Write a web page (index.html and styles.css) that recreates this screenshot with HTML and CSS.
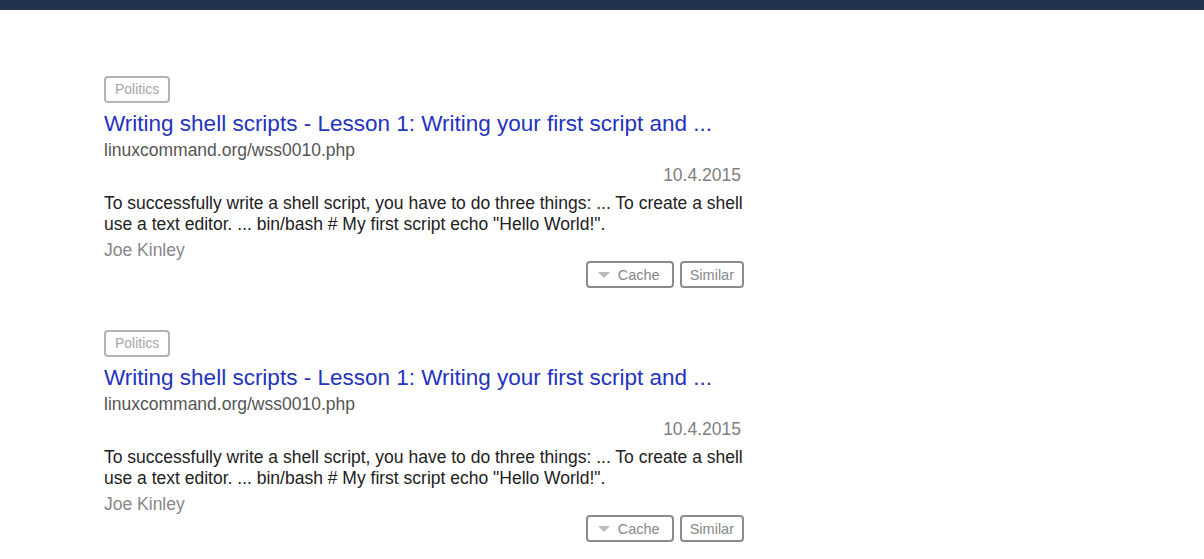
FILE: index.html
```html
<!DOCTYPE html>
<html>
<head>
<meta charset="utf-8">
<link rel="stylesheet" href="styles.css">
</head>
<body>
<div class="topbar"></div>
<main class="results">
  <article class="result">
    <span class="tag">Politics</span>
    <a class="title" href="#">Writing shell scripts - Lesson 1: Writing your first script and ...</a>
    <div class="url">linuxcommand.org/wss0010.php</div>
    <div class="date">10.4.2015</div>
    <p class="snippet">To successfully write a shell script, you have to do three things: ... To create a shell use a text editor. ... bin/bash # My first script echo "Hello World!".</p>
    <div class="author">Joe Kinley</div>
    <div class="actions">
      <button class="btn btn-cache"><span class="caret"></span>Cache</button>
      <button class="btn">Similar</button>
    </div>
  </article>
  <article class="result">
    <span class="tag">Politics</span>
    <a class="title" href="#">Writing shell scripts - Lesson 1: Writing your first script and ...</a>
    <div class="url">linuxcommand.org/wss0010.php</div>
    <div class="date">10.4.2015</div>
    <p class="snippet">To successfully write a shell script, you have to do three things: ... To create a shell use a text editor. ... bin/bash # My first script echo "Hello World!".</p>
    <div class="author">Joe Kinley</div>
    <div class="actions">
      <button class="btn btn-cache"><span class="caret"></span>Cache</button>
      <button class="btn">Similar</button>
    </div>
  </article>
</main>
</body>
</html>
```
FILE: styles.css
```css
html, body {
  margin: 0;
  padding: 0;
  background: #fff;
  font-family: "Liberation Sans", Arial, sans-serif;
}
.topbar {
  height: 10px;
  background: #22344d;
}
.results {
  width: 640px;
  margin-left: 104px;
  padding-top: 66px;
  display: flex;
  flex-direction: column;
  gap: 42px;
}
.result {
  display: flex;
  flex-direction: column;
  align-items: flex-start;
}
.tag {
  display: inline-block;
  border: 2px solid #b3b3b3;
  border-radius: 4px;
  color: #a6a6a6;
  font-size: 14px;
  line-height: 23px;
  padding: 0 9px;
}
.title {
  margin-top: 7px;
  font-size: 22.5px;
  line-height: 28px;
  color: #2433c0;
  text-decoration: none;
}
.url {
  margin-top: 1px;
  font-size: 17.5px;
  line-height: 22px;
  color: #555;
}
.date {
  align-self: stretch;
  text-align: right;
  padding-right: 3px;
  margin-top: 3px;
  font-size: 17.5px;
  line-height: 22px;
  color: #808080;
}
.snippet {
  margin: 7px 0 0;
  font-size: 17.5px;
  line-height: 21px;
  color: #222;
}
.author {
  margin-top: 4px;
  font-size: 17.5px;
  line-height: 22px;
  color: #888;
}
.actions {
  align-self: stretch;
  display: flex;
  justify-content: flex-end;
  gap: 6px;
  margin-top: 0;
}
.btn {
  font-family: inherit;
  background: #fff;
  border: 2px solid #8c8c8c;
  border-radius: 4px;
  color: #888;
  font-size: 14.5px;
  height: 27px;
  padding: 0 8px;
  display: flex;
  align-items: center;
}
.btn-cache {
  padding: 0 12px 0 10px;
}
.caret {
  display: inline-block;
  width: 0;
  height: 0;
  border-left: 6px solid transparent;
  border-right: 6px solid transparent;
  border-top: 6px solid #bbb;
  margin-right: 8px;
}
```
